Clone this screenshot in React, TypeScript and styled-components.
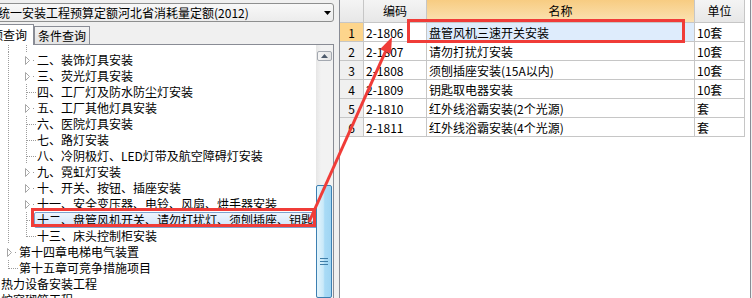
import React from 'react'
import styled, { createGlobalStyle, css } from 'styled-components'

const GlobalStyle = createGlobalStyle`
  html, body {
    margin: 0;
    padding: 0;
    background: #f0f0f0;
  }
  body {
    font-family: "Noto Sans CJK SC", "Noto Sans", sans-serif;
    font-size: 12px;
    color: #000;
  }
`

type Kind = 'none' | 'pipe' | 'tee' | 'elbow' | 'expand'

interface TreeItem {
  label: string
  level: number
  kind: Kind
  selected?: boolean
}

const tree: TreeItem[] = [
  { label: '二、装饰灯具安装', level: 2, kind: 'expand' },
  { label: '三、荧光灯具安装', level: 2, kind: 'expand' },
  { label: '四、工厂灯及防水防尘灯安装', level: 2, kind: 'tee' },
  { label: '五、工厂其他灯具安装', level: 2, kind: 'expand' },
  { label: '六、医院灯具安装', level: 2, kind: 'tee' },
  { label: '七、路灯安装', level: 2, kind: 'tee' },
  { label: '八、冷阴极灯、LED灯带及航空障碍灯安装', level: 2, kind: 'tee' },
  { label: '九、霓虹灯安装', level: 2, kind: 'expand' },
  { label: '十、开关、按钮、插座安装', level: 2, kind: 'expand' },
  { label: '十一、安全变压器、电铃、风扇、烘手器安装', level: 2, kind: 'expand' },
  {
    label: '十二、盘管风机开关、请勿打扰灯、须刨插座、钥匙取电器安装',
    level: 2,
    kind: 'tee',
    selected: true,
  },
  { label: '十三、床头控制柜安装', level: 2, kind: 'elbow' },
  { label: '第十四章电梯电气装置', level: 1, kind: 'expand' },
  { label: '第十五章可竞争措施项目', level: 1, kind: 'elbow' },
  { label: '热力设备安装工程', level: 0, kind: 'none' },
  { label: '炉窑砌筑工程', level: 0, kind: 'none' },
]

const rows = [
  { no: 1, code: '2-1806', name: '盘管风机三速开关安装', unit: '10套' },
  { no: 2, code: '2-1807', name: '请勿打扰灯安装', unit: '10套' },
  { no: 3, code: '2-1808', name: '须刨插座安装(15A以内)', unit: '10套' },
  { no: 4, code: '2-1809', name: '钥匙取电器安装', unit: '10套' },
  { no: 5, code: '2-1810', name: '红外线浴霸安装(2个光源)', unit: '套' },
  { no: 6, code: '2-1811', name: '红外线浴霸安装(4个光源)', unit: '套' },
]

const DOT = '#9c9c9c'
const RED = '#f03c38'

const Window = styled.div`
  position: relative;
  width: 752px;
  height: 298px;
  overflow: hidden;
  display: flex;
  background: #f0f0f0;
`

const LeftPane = styled.div`
  width: 334px;
  flex: none;
  display: flex;
  flex-direction: column;
`

const Combo = styled.div`
  margin: 3px 0 0 -28px;
  height: 19px;
  box-sizing: border-box;
  border: 1px solid #8e8f8f;
  border-radius: 3px;
  background: linear-gradient(#f8f8f8, #ececec);
  display: flex;
  align-items: center;
  justify-content: space-between;
  padding: 0 2px 0 1px;
  white-space: nowrap;
  line-height: 17px;
`

const TabStrip = styled.div`
  display: flex;
  align-items: flex-end;
  height: 20px;
  margin-top: 2px;
`

const Tab = styled.div<{ $active?: boolean }>`
  box-sizing: border-box;
  border: 1px solid #898c95;
  border-bottom: none;
  padding: 0 3px;
  white-space: nowrap;
  ${({ $active }) =>
    $active
      ? css`
          position: relative;
          z-index: 1;
          height: 21px;
          margin: 0 0 -1px -28px;
          padding: 0 6px;
          background: #fff;
          line-height: 19px;
        `
      : css`
          height: 18px;
          background: linear-gradient(#f3f3f3, #e4e4e4);
          line-height: 17px;
        `}
`

const TreePanel = styled.div`
  flex: 1;
  display: flex;
  min-height: 0;
  background: #fff;
  border-top: 1px solid #898c95;
  border-right: 1px solid #898c95;
`

const TreeBody = styled.div`
  flex: 1;
  overflow: hidden;
`

const TreeRow = styled.div<{ $h?: number }>`
  display: flex;
  align-items: center;
  height: ${({ $h }) => $h ?? 16}px;
  margin-left: -17px;
`

const Gutter = styled.span`
  flex: none;
  width: 18px;
  display: flex;
`

const Label = styled.span<{ $selected?: boolean }>`
  white-space: nowrap;
  line-height: 16px;
  ${({ $selected }) =>
    $selected &&
    css`
      box-sizing: border-box;
      height: 16px;
      line-height: 14px;
      margin-left: -3px;
      padding: 0 3px 0 2px;
      border: 1px solid #7da2ce;
      border-radius: 2px;
      background: linear-gradient(#eef5fd, #cfe3fa);
    `}
`

const VScroll = styled.div`
  flex: none;
  width: 17px;
  display: flex;
  flex-direction: column;
  background: linear-gradient(90deg, #e6e6e6, #f2f2f2 30%, #f2f2f2);
`

const ScrollButton = styled.div`
  margin: 6px 1px 0;
  height: 15px;
  box-sizing: border-box;
  border: 1px solid #a3a8b0;
  border-radius: 2px;
  background: linear-gradient(90deg, #f6f6f6, #e4e4e4);
  display: flex;
  align-items: center;
  justify-content: center;
`

const Thumb = styled.div`
  margin: 124px 1px 0 0;
  height: 140px;
  box-sizing: border-box;
  border: 1px solid #3c7fb1;
  border-radius: 2px;
  background: linear-gradient(90deg, #e3f4fc, #c9e9f9 45%, #a9dbf6 55%, #9fd5f3);
  display: flex;
  justify-content: center;
  padding-top: 72px;
`

const Splitter = styled.div`
  width: 5px;
  flex: none;
  border-right: 1px solid #898c95;
`

const RightPane = styled.div`
  width: 410px;
  flex: none;
  background: #fff;
  border-right: 1px solid #898c95;
`

const Grid = styled.div`
  display: grid;
  grid-template-columns: 24px 63px 268px 50px;
  grid-template-rows: 23px;
  grid-auto-rows: 19px;
`

const Cell = styled.div<{ $center?: boolean; $bg?: string }>`
  box-sizing: border-box;
  border-right: 1px solid #c6c6c6;
  border-bottom: 1px solid #c6c6c6;
  padding: 0 2px;
  line-height: 20px;
  white-space: nowrap;
  overflow: hidden;
  text-align: ${({ $center }) => ($center ? 'center' : 'left')};
  background: ${({ $bg }) => $bg ?? '#fff'};
`

const HeadCell = styled(Cell)<{ $active?: boolean }>`
  text-align: center;
  line-height: 21px;
  background: ${({ $active }) =>
    $active
      ? 'linear-gradient(#f7cc82, #fbe2b2)'
      : 'linear-gradient(#f4f4f4, #e7e7e7)'};
`

const Overlay = styled.svg`
  position: absolute;
  left: 0;
  top: 0;
  pointer-events: none;
`

function Connector({ kind, h = 16 }: { kind: Kind; h?: number }) {
  const mid = 8.5
  const dash = { stroke: DOT, strokeDasharray: '1 1' }
  return (
    <Gutter>
      <svg width="18" height={h} shapeRendering="crispEdges">
        {(kind === 'pipe' || kind === 'tee') && (
          <line x1="7.5" y1="0" x2="7.5" y2={h} {...dash} />
        )}
        {kind === 'elbow' && <line x1="7.5" y1="0" x2="7.5" y2="9" {...dash} />}
        {(kind === 'tee' || kind === 'elbow') && (
          <line x1="8" y1={mid} x2="18" y2={mid} {...dash} />
        )}
        {kind === 'expand' && (
          <>
            <polygon
              points="6.5,4.5 10.5,8.5 6.5,12.5"
              fill="#fff"
              stroke="#a6a6a6"
              shapeRendering="auto"
            />
            <line x1="14" y1={mid} x2="15" y2={mid} stroke={DOT} />
          </>
        )}
      </svg>
    </Gutter>
  )
}

function TreeLine({ item }: { item: TreeItem }) {
  const guides: Kind[] = []
  for (let i = 0; i < item.level; i++) guides.push(i === 1 ? 'pipe' : 'none')
  return (
    <TreeRow>
      {guides.map((g, i) => (
        <Connector key={i} kind={g} />
      ))}
      <Connector kind={item.kind} />
      <Label $selected={item.selected}>{item.label}</Label>
    </TreeRow>
  )
}

function Annotations() {
  // arrow from the selected tree node to the matching grid row
  const tip = { x: 392, y: 37 }
  const tail = { x: 309, y: 222 }
  const dx = tip.x - tail.x
  const dy = tip.y - tail.y
  const len = Math.hypot(dx, dy)
  const ux = dx / len
  const uy = dy / len
  const bx = tip.x - ux * 16
  const by = tip.y - uy * 16
  const nx = -uy
  const ny = ux
  const head = `${tip.x},${tip.y} ${bx + nx * 6},${by + ny * 6} ${bx - nx * 6},${by - ny * 6}`
  return (
    <Overlay width="752" height="298">
      <rect x="32.5" y="209.5" width="282" height="16" fill="none" stroke={RED} strokeWidth="3" />
      <rect x="408.5" y="20.5" width="275" height="21" fill="none" stroke={RED} strokeWidth="3" />
      <line x1={tail.x} y1={tail.y} x2={bx} y2={by} stroke={RED} strokeWidth="3" />
      <polygon points={head} fill={RED} />
    </Overlay>
  )
}

export default function App() {
  return (
    <>
      <GlobalStyle />
      <Window>
        <LeftPane>
          <Combo>
            <span>全国统一安装工程预算定额河北省消耗量定额(2012)</span>
            <svg width="7" height="4">
              <polygon points="0,0 7,0 3.5,4" fill="#000" />
            </svg>
          </Combo>
          <TabStrip>
            <Tab $active>定额查询</Tab>
            <Tab>条件查询</Tab>
          </TabStrip>
          <TreePanel>
            <TreeBody>
              <TreeRow $h={7}>
                <Connector kind="none" h={7} />
                <Connector kind="pipe" h={7} />
                <Connector kind="pipe" h={7} />
              </TreeRow>
              {tree.map((item) => (
                <TreeLine key={item.label} item={item} />
              ))}
            </TreeBody>
            <VScroll>
              <ScrollButton>
                <svg width="7" height="4">
                  <polygon points="0,4 7,4 3.5,0" fill="#4d5a6b" />
                </svg>
              </ScrollButton>
              <Thumb>
                <svg width="8" height="7">
                  <g stroke="#3f7ea8">
                    <line x1="0" y1="0.5" x2="8" y2="0.5" />
                    <line x1="0" y1="3.5" x2="8" y2="3.5" />
                    <line x1="0" y1="6.5" x2="8" y2="6.5" />
                  </g>
                </svg>
              </Thumb>
            </VScroll>
          </TreePanel>
        </LeftPane>
        <Splitter />
        <RightPane>
          <Grid>
            <HeadCell />
            <HeadCell>编码</HeadCell>
            <HeadCell $active>名称</HeadCell>
            <HeadCell>单位</HeadCell>
            {rows.map((r, i) => (
              <React.Fragment key={r.no}>
                <Cell $center $bg={i === 0 ? '#fdd58c' : '#f0f0f0'}>
                  {r.no}
                </Cell>
                <Cell>{r.code}</Cell>
                <Cell $bg={i === 0 ? '#deecfc' : undefined}>{r.name}</Cell>
                <Cell>{r.unit}</Cell>
              </React.Fragment>
            ))}
          </Grid>
        </RightPane>
        <Annotations />
      </Window>
    </>
  )
}
